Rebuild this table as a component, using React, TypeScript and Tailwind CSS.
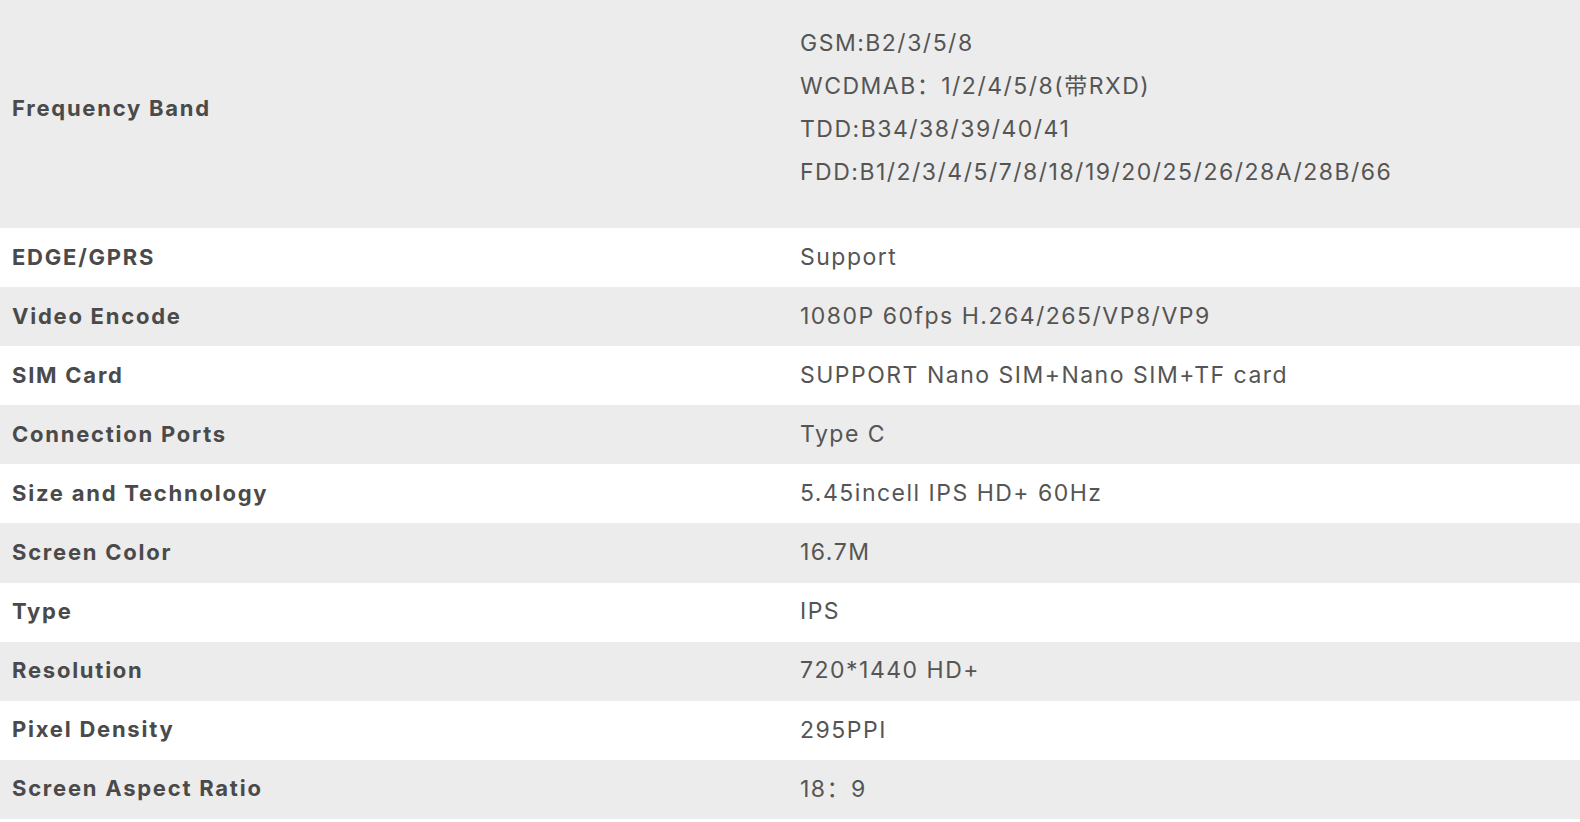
const rows: [string, string][] = [
  ["EDGE/GPRS", "Support"],
  ["Video Encode", "1080P 60fps H.264/265/VP8/VP9"],
  ["SIM Card", "SUPPORT Nano SIM+Nano SIM+TF card"],
  ["Connection Ports", "Type C"],
  ["Size and Technology", "5.45incell IPS HD+ 60Hz"],
  ["Screen Color", "16.7M"],
  ["Type", "IPS"],
  ["Resolution", "720*1440 HD+"],
  ["Pixel Density", "295PPI"],
  ["Screen Aspect Ratio", "18：9"],
]

const bands = [
  "GSM:B2/3/5/8",
  "WCDMAB：1/2/4/5/8(带RXD)",
  "TDD:B34/38/39/40/41",
  "FDD:B1/2/3/4/5/7/8/18/19/20/25/26/28A/28B/66",
]

export default function App() {
  return (
    <main className="min-h-screen bg-white font-['Inter','Noto_Sans_CJK_SC',sans-serif] text-[22px]">
      {/* ===== frequency band ===== */}
      <div className="grid grid-cols-[787px_1fr] h-[228px] bg-[#ececec]">
        <div className="flex items-center pl-3 pb-3 font-bold text-[#4a4a4a] tracking-[0.08em]">
          Frequency Band
        </div>
        <div className="pl-[13px] pt-[22px] pb-[34px] text-[23px] text-[#555] leading-[43px] tracking-[0.065em]">
          {bands.map((b) => (
            <p key={b}>{b}</p>
          ))}
        </div>
      </div>

      {/* ===== spec rows ===== */}
      {rows.map(([label, value], i) => (
        <div
          key={label}
          className={
            i % 2 === 0
              ? "grid grid-cols-[787px_1fr] h-[59.1px] bg-white"
              : "grid grid-cols-[787px_1fr] h-[59.1px] bg-[#ececec]"
          }
        >
          <div className="flex items-center pl-3 pb-px font-bold text-[#4a4a4a] tracking-[0.08em]">
            {label}
          </div>
          <div className="flex items-center pl-[13px] pb-px text-[23px] text-[#555] tracking-[0.065em]">
            {value}
          </div>
        </div>
      ))}
    </main>
  )
}
